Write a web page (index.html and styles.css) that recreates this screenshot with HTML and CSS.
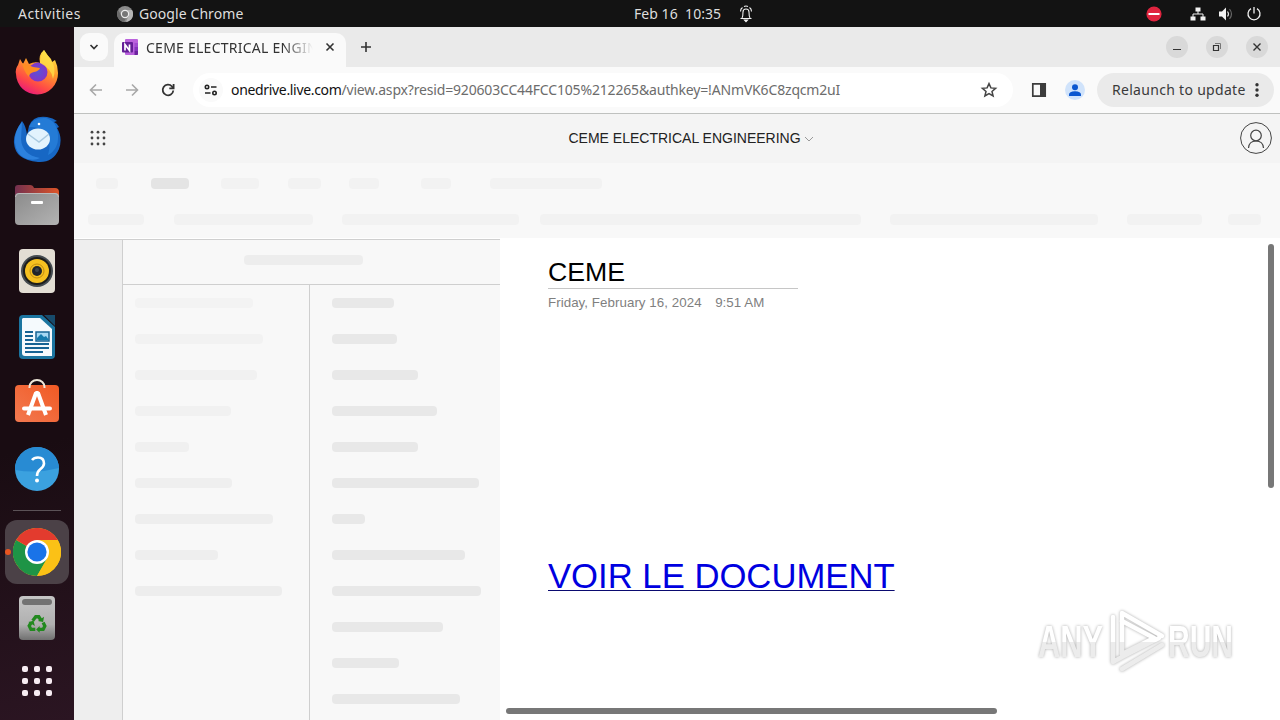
FILE: index.html
```html
<!DOCTYPE html>
<html lang="en">

<head>
    <meta charset="UTF-8">
    <meta name="viewport" content="width=device-width, initial-scale=1.0">
    <title>CEME ELECTRICAL ENGINEERING</title>
    <link rel="stylesheet" href="styles.css">
</head>

<body>
    <div class="topbar">
        <span class="activities">Activities</span>
        <svg class="app-icon" width="16" height="16" viewBox="0 0 16 16">
            <circle cx="8" cy="8" r="8" fill="#8b8b8b"/>
            <path d="M8 4h7A8 8 0 0 1 9 16l2.500-6z" fill="#b5b5b5"/>
            <path d="M1.200 4A8 8 0 0 0 7 16l2-4-5-3z" fill="#6a6a6a"/>
            <circle cx="8" cy="8" r="4.200" fill="#eee"/>
            <circle cx="8" cy="8" r="3" fill="#777"/>
        </svg>
        <span class="app-name">Google Chrome</span>
        <span class="clock">Feb 16&nbsp; 10:35</span>
        <svg class="bell" width="14" height="18" viewBox="0 0 14 18" fill="none" stroke="#f2f2f2" stroke-width="1.100">
            <path d="M1.500 13.500h11M3 13c1-1.500 1-3 1-6 0-4 6-4 6 0 0 3 0 4.500 1 6M3.500 2.500C2 3.500 1.500 5 1.500 6.500M10.500 2.500c1.500 1 2 2.500 2 4M5 1.500q2-1 4 0"/>
            <path d="M5.500 15h3l-1.500 1.600z" fill="#fff"/>
        </svg>
        <div class="tray">
            <svg class="dnd" width="16" height="16" viewBox="0 0 16 16">
                <circle cx="8" cy="8" r="7.600" fill="#e0243f"/>
                <path d="M2.500 8h11" stroke="#fff" stroke-width="2"/>
            </svg>
            <svg width="16" height="16" viewBox="0 0 16 16" fill="#f2f2f2">
                <path d="M5.500 1.500h5v4h-5zM.5 10.500h5v4h-5zM10.500 10.500h5v4h-5z"/>
                <path d="M8 5v3M3 11V8h10v3" fill="none" stroke="#f2f2f2"/>
            </svg>
            <svg width="16" height="16" viewBox="0 0 16 16">
                <path d="M1 5.500h3l4-4v13l-4-4H1z" fill="#f2f2f2"/>
                <path d="M9.500 5.500q2 2.500 0 5" fill="none" stroke="#ddd" stroke-width="1.200"/>
                <path d="M11.500 3q4 5 0 10" fill="none" stroke="#666" stroke-width="1.200"/>
            </svg>
            <svg width="16" height="16" viewBox="0 0 16 16" fill="none" stroke="#f2f2f2" stroke-width="1.300">
                <path d="M8 1v6.500M5 2.600a6 6 0 1 0 6 0"/>
            </svg>
        </div>
    </div>

    <div class="desktop">
        <div class="dock">
            <!-- Firefox -->
            <svg class="firefox" width="48" height="48" viewBox="0 0 48 48">
                <defs>
                    <linearGradient id="ff" x1=".8" y1="0" x2=".3" y2="1">
                        <stop offset="0" stop-color="#fff04a"/>
                        <stop offset=".4" stop-color="#ff9a2a"/>
                        <stop offset=".75" stop-color="#ff4a46"/>
                        <stop offset="1" stop-color="#e8197c"/>
                    </linearGradient>
                    <radialGradient id="ffglobe">
                        <stop offset="0" stop-color="#5b51d8"/>
                        <stop offset="1" stop-color="#8236c8"/>
                    </radialGradient>
                </defs>
                <path d="M5 17l2-6 3 5 3-6 3 6q6-3 11-1Q25 7 31 2q3 5 7 9l1 3 3-2q3 6 3 13a21 21 0 0 1-42 1q-1-5 2-9z" fill="url(#ff)"/>
                <circle cx="25" cy="24" r="9.500" fill="url(#ffglobe)"/>
                <path d="M9 15q7 2 11 4l7 1q-1 3-6 4-5 1-5 5-5-5-7-14z" fill="#ff8d23"/>
                <path d="M31 2q4 6 7 10 6 9 2 19-1-10-13-16 0-7 4-13z" fill="#ffe14a" opacity=".75"/>
            </svg>
            <!-- Thunderbird -->
            <svg class="thunderbird" width="48" height="48" viewBox="0 0 48 48">
                <path d="M16 11Q20 0 34 2q6 1 10 4l-3 1q3 1 5 5l-2 1q6 10 2 21-6 14-21 13Q2 45 1 28 0 19 9 6q4 5 5 14z" fill="#1767c4"/>
                <path d="M16 12Q20 2 33 3q11 3 12 17 1 14-10 20 4-13-2-22-6-7-17-6z" fill="#247bd6"/>
                <path d="M2 23q-1 16 12 21 8 2 13-1Q9 40 8 24l1-17q-6 7-7 16z" fill="#3288e4" opacity=".8"/>
                <ellipse cx="25" cy="24" rx="12" ry="10.500" fill="#e2f3fd"/>
                <path d="M15 19l11 8 10-8" fill="none" stroke="#a8c9df" stroke-width="1.500"/>
                <circle cx="26" cy="9" r="1.300" fill="#fff"/>
            </svg>
            <!-- Files -->
            <svg class="files" width="46" height="42" viewBox="0 0 46 42">
                <defs>
                    <linearGradient id="tab">
                        <stop offset="0" stop-color="#73304f"/>
                        <stop offset="1" stop-color="#de5528"/>
                    </linearGradient>
                    <linearGradient id="folder" x2="1" y2="1">
                        <stop offset="0" stop-color="#8b8b8b"/>
                        <stop offset="1" stop-color="#b3b3b3"/>
                    </linearGradient>
                </defs>
                <path d="M1 15V4q0-3 3-3h12q3 0 4 3h21q4 0 4 4v8z" fill="url(#tab)"/>
                <rect x="1" y="9" width="44" height="32" rx="4" fill="url(#folder)"/>
                <path d="M1.500 13q0-3.500 3.500-3.500h36q3.500 0 3.500 3.500" fill="none" stroke="#bbb"/>
                <rect x="17" y="17" width="12" height="3" rx="1" fill="#fff"/>
            </svg>
            <!-- Rhythmbox -->
            <svg class="music" width="38" height="46" viewBox="0 0 38 46">
                <rect x="1" y="1" width="36" height="44" rx="4" fill="#e3ded4"/>
                <circle cx="19" cy="23" r="16" fill="#444b50"/>
                <circle cx="19" cy="23" r="14" fill="#1d1d1b"/>
                <circle cx="19" cy="23" r="12" fill="#f5c020"/>
                <circle cx="19" cy="23" r="7" fill="none" stroke="#c28d10"/>
                <circle cx="19" cy="23" r="5" fill="#20252b"/>
                <circle cx="19" cy="22" r="2" fill="#3c444d"/>
            </svg>
            <!-- Writer -->
            <svg class="writer" width="38" height="46" viewBox="0 0 38 46">
                <path d="M5 1h19l13 12v28q0 4-4 4H5q-4 0-4-4V5q0-4 4-4z" fill="#1b75a0"/>
                <path d="M26 1h11v11z" fill="#174b6b"/>
                <path d="M5 4h17l12 11v27H7q-3 0-3-3V5z" fill="#f5fafd"/>
                <path d="M7 18h8M7 22h8M7 26h8M7 30h24M7 34h24M7 38h18" stroke="#176494" stroke-width="2"/>
                <rect x="18" y="18" width="13" height="9" fill="#a7d8f3" stroke="#176494" stroke-width="1.500"/>
                <path d="M19 26v-2l4-4 3 3 2-1 3 4z" fill="#167bad"/>
            </svg>
            <!-- Software -->
            <svg class="software" width="46" height="46" viewBox="0 0 46 46">
                <defs>
                    <linearGradient id="bag" x1="1" x2="0" y2="1">
                        <stop offset="0" stop-color="#f15a24"/>
                        <stop offset="1" stop-color="#f27950"/>
                    </linearGradient>
                </defs>
                <rect x="1" y="7" width="44" height="37" rx="4" fill="url(#bag)"/>
                <path d="M15.500 10V9a7.500 7 0 0 1 15 0v1" fill="none" stroke="#eee8d9" stroke-width="2"/>
                <path d="M14 37l8-22h2l8 22" fill="none" stroke="#fff" stroke-width="4" stroke-linejoin="bevel"/>
                <path d="M10 30.500h26" stroke="#fff" stroke-width="4" stroke-linecap="round"/>
            </svg>
            <!-- Help -->
            <svg class="help" width="46" height="46" viewBox="0 0 46 46">
                <circle cx="23" cy="23" r="22" fill="#3ba1df"/>
                <path d="M1 24a22 22 0 0 1 44-2q-22 6-44 2z" fill="#288bd3"/>
                <path d="M18 14q2-2.500 6-2.500 6 0 6 6 0 3-4 6-3 2.500-3 6.500" fill="none" stroke="#fff" stroke-width="2.600"/>
                <circle cx="23" cy="34.500" r="2" fill="#fff"/>
            </svg>
            <div class="separator"></div>
            <div class="running">
                <span class="dot"></span>
                <svg width="48" height="48" viewBox="0 0 48 48">
                    <circle cx="24" cy="24" r="24" fill="#fbc116"/>
                    <path d="M24 24L3.200 12A24 24 0 0 0 24 48l10.400-18z" fill="#1e9446"/>
                    <path d="M24 24L3.200 12a24 24 0 0 1 41.600 0z" fill="#e33b2e"/>
                    <path d="M24 12h20.800A24 24 0 0 1 24 48l10.400-18z" fill="#fbc116"/>
                    <circle cx="24" cy="24" r="12" fill="#fff"/>
                    <circle cx="24" cy="24" r="9.600" fill="#1a73e8"/>
                </svg>
            </div>
            <!-- Trash -->
            <svg class="trash" width="38" height="46" viewBox="0 0 38 46">
                <defs>
                    <linearGradient id="bin" x2="0" y2="1">
                        <stop offset="0" stop-color="#c5c5c5"/>
                        <stop offset=".65" stop-color="#b0b0b0"/>
                        <stop offset="1" stop-color="#707070"/>
                    </linearGradient>
                </defs>
                <rect x="1" y="1" width="36" height="44" rx="4" fill="url(#bin)"/>
                <rect x="4" y="4" width="30" height="6" rx="3" fill="#727272"/>
                <g transform="translate(2.500 3.500) scale(.87)">
                    <g fill="none" stroke="#22891f" stroke-width="3.800">
                        <path d="M14 25.500l3.500-4.500h3.500l2.500 4"/>
                        <path d="M26 27.500l2 4-2 4h-5"/>
                        <path d="M17 35.500h-5l-2-4 2-3.500"/>
                    </g>
                    <path d="M20 26l6 1 1-6zM22 31.500v8l-4-4zM9 27l6-1.500 1.500 6z" fill="#22891f"/>
                </g>
            </svg>
            <div class="show-apps">
                <i></i><i></i><i></i><i></i><i></i><i></i><i></i><i></i><i></i>
            </div>
        </div>

        <div class="browser">
            <div class="tabstrip">
                <div class="tab-search">
                    <svg width="10" height="10" viewBox="0 0 10 10" fill="none" stroke="#333" stroke-width="1.700"><path d="M1.500 3L5 6.500 8.500 3"/></svg>
                </div>
                <div class="tab">
                    <svg class="onenote" width="16" height="16" viewBox="0 0 16 16">
                        <rect x="3" y="0" width="13" height="16" rx="1" fill="#ba62dc"/>
                        <path d="M12.500 4H16v4h-3.500z" fill="#a04cd0"/>
                        <path d="M12.500 8H16v4h-3.500z" fill="#8535bd"/>
                        <path d="M12.500 12H16v3q0 1-1 1h-2.500z" fill="#6d229f"/>
                        <rect x="0" y="3" width="11" height="10.500" rx="1" fill="#641f97"/>
                        <path d="M3 11.500v-6l4.500 6v-6" fill="none" stroke="#fff" stroke-width="1.700"/>
                    </svg>
                    <span class="tab-title">CEME ELECTRICAL ENGINEERING</span>
                    <svg class="tab-close" width="10" height="10" viewBox="0 0 10 10" stroke="#333" stroke-width="1.600"><path d="M1.500 1.500l7 7M8.500 1.500l-7 7"/></svg>
                </div>
                <svg class="new-tab" width="12" height="12" viewBox="0 0 12 12" stroke="#333" stroke-width="1.600"><path d="M6 1v10M1 6h10"/></svg>
                <div class="window-buttons">
                    <span><svg width="10" height="10" viewBox="0 0 10 10" stroke="#333"><path d="M1 7.500h8"/></svg></span>
                    <span><svg width="10" height="10" viewBox="0 0 10 10" fill="none" stroke="#333"><path d="M1.500 3.500h5v5h-5z" stroke-width="1.200"/><path d="M3 1.500h5.500V7" stroke="#777"/></svg></span>
                    <span><svg width="10" height="10" viewBox="0 0 10 10" stroke="#333" stroke-width="1.400"><path d="M1.500 1.500l7 7M8.500 1.500l-7 7"/></svg></span>
                </div>
            </div>

            <div class="toolbar">
                <svg class="nav back" width="14" height="14" viewBox="0 0 14 14"><path d="M13 7H2M7 1.500L1.500 7 7 12.500"/></svg>
                <svg class="nav forward" width="14" height="14" viewBox="0 0 14 14"><path d="M1 7h11M7 1.500L12.500 7 7 12.500"/></svg>
                <svg class="nav reload" width="14" height="14" viewBox="0 0 14 14"><path d="M12.300 7.500a5.300 5.300 0 1 1-1.300-4l1.200 1.300M12.600 1v4.300H8.300"/></svg>
                <div class="omnibox">
                    <span class="site-info">
                        <svg width="14" height="12" viewBox="0 0 14 12" fill="none" stroke="#222" stroke-width="1.600">
                            <circle cx="3" cy="3" r="1.700"/><path d="M7 3h5.500M1 9h5.500"/><circle cx="10.500" cy="9" r="1.700"/>
                        </svg>
                    </span>
                    <span class="url"><span class="host">onedrive.live.com</span><span class="path">/view.aspx?resid=920603CC44FCC105%212265&amp;authkey=!ANmVK6C8zqcm2uI</span></span>
                    <svg class="star" width="18" height="18" viewBox="0 0 18 18" fill="none" stroke="#444" stroke-width="1.500"><path d="M9 2.600l1.900 4.300 4.700.4-3.600 3.100 1.100 4.600L9 12.600 4.900 15 6 10.400 2.400 7.300l4.700-.4z"/></svg>
                </div>
                <svg class="side-panel" width="16" height="16" viewBox="0 0 16 16"><path d="M1.800 1.800h12.400v12.400H1.800z" fill="none" stroke="#3c3c3c" stroke-width="1.700"/><path d="M9 2h5v12H9z" fill="#3c3c3c"/></svg>
                <svg class="profile" width="20" height="20" viewBox="0 0 20 20"><circle cx="10" cy="10" r="10" fill="#d0e3fb"/><circle cx="10" cy="7.200" r="3" fill="#0b57d0"/><path d="M4 16v-1.500q0-3 6-3.300 6 .3 6 3.300V16z" fill="#0b57d0"/></svg>
                <div class="relaunch">
                    <span>Relaunch to update</span>
                    <svg width="4" height="16" viewBox="0 0 4 16" fill="#333"><circle cx="2" cy="2.700" r="1.700"/><circle cx="2" cy="8" r="1.700"/><circle cx="2" cy="13.300" r="1.700"/></svg>
                </div>
            </div>

            <div class="page">
                <div class="header">
                    <svg class="waffle" width="16" height="16" viewBox="0 0 16 16" fill="#444">
                        <circle cx="2" cy="2.200" r="1.400"/><circle cx="8" cy="2.200" r="1.400"/><circle cx="14" cy="2.200" r="1.400"/>
                        <circle cx="2" cy="8" r="1.400"/><circle cx="8" cy="8" r="1.400"/><circle cx="14" cy="8" r="1.400"/>
                        <circle cx="2" cy="14" r="1.400"/><circle cx="8" cy="14" r="1.400"/><circle cx="14" cy="14" r="1.400"/>
                    </svg>
                    <span class="doc-name">CEME ELECTRICAL ENGINEERING</span>
                    <svg class="chevron" width="10" height="6" viewBox="0 0 10 6" fill="none" stroke="#999"><path d="M1 1l4 4 4-4"/></svg>
                    <svg class="account" width="32" height="32" viewBox="0 0 32 32" fill="none" stroke="#444">
                        <circle cx="16" cy="16" r="15.400"/><circle cx="16" cy="13.500" r="5.300" stroke-width="1.200"/><path d="M8.500 26q.5-7 7.500-7t7.500 7" stroke-width="1.200"/>
                    </svg>
                </div>

                <div class="ribbon">
                    <div class="ribbon-tabs"><i></i><i></i><i></i><i></i><i></i><i></i><i></i></div>
                    <div class="ribbon-tools"><i></i><i></i><i></i><i></i><i></i><i></i><i></i></div>
                </div>

                <div class="workspace">
                    <div class="navigation">
                        <div class="rail"></div>
                        <div class="panes">
                            <div class="pane-header"><i></i></div>
                            <div class="lists">
                                <div class="sections"><i></i><i></i><i></i><i></i><i></i><i></i><i></i><i></i><i></i></div>
                                <div class="pages"><i></i><i></i><i></i><i></i><i></i><i></i><i></i><i></i><i></i><i></i><i></i><i></i></div>
                            </div>
                        </div>
                    </div>
                    <div class="canvas">
                        <h1>CEME</h1>
                        <p class="date"><span>Friday, February 16, 2024</span><span>9:51 AM</span></p>
                        <a class="doc-link" href="#">VOIR LE DOCUMENT</a>
                        <div class="vscroll"></div>
                        <div class="hscroll"></div>
                    </div>
                </div>
            </div>
        </div>
    </div>

    <!-- watermark over the recording -->
    <svg class="watermark" width="220" height="80" viewBox="0 0 220 80">
        <defs>
            <linearGradient id="wm" gradientUnits="userSpaceOnUse" x1="0" y1="0" x2="0" y2="80">
                <stop offset=".49" stop-color="#fff"/>
                <stop offset=".49" stop-color="#ececec"/>
            </linearGradient>
        </defs>
        <g fill="url(#wm)">
            <text x="8" y="54" textLength="65" lengthAdjust="spacingAndGlyphs">ANY</text>
            <text x="138" y="54" textLength="65" lengthAdjust="spacingAndGlyphs">RUN</text>
        </g>
        <g fill="none" stroke="url(#wm)" stroke-width="4.500" stroke-linejoin="round" stroke-linecap="round">
            <path d="M92 52V10l40 23M83 14v45l9-5 37-19"/>
            <path d="M92 18l32 17-32 16M92 66l40-24"/>
        </g>
    </svg>
</body>

</html>
```
FILE: styles.css
```css
* {
    box-sizing: border-box;
}

body {
    margin: 0;
    width: 1280px;
    height: 720px;
    overflow: hidden;
    display: flex;
    flex-direction: column;
    font-family: "Noto Sans", "Open Sans", sans-serif;
    font-size: 14px;
    background: #fff;
}

svg {
    display: block;
    flex-shrink: 0;
}

i {
    display: block;
    flex-shrink: 0;
}

/* desktop top bar */
.topbar {
    height: 27px;
    flex-shrink: 0;
    display: flex;
    align-items: center;
    background: #131313;
    color: #dedede;
    padding-left: 18px;
    white-space: nowrap;
}

.activities {
    width: 99px;
    letter-spacing: 0.45px;
}

.app-name {
    width: 501px;
    padding-left: 6px;
    letter-spacing: 0.08px;
}

.clock {
    width: 105px;
    letter-spacing: 0.05px;
}

.tray {
    display: flex;
    margin-left: auto;
    margin-right: 18px;
    gap: 12px;
}

.dnd {
    margin-right: 16px;
}

.desktop {
    flex: 1;
    min-height: 0;
    display: flex;
}

/* dock */
.dock {
    width: 74px;
    flex-shrink: 0;
    display: flex;
    flex-direction: column;
    align-items: center;
    background: linear-gradient(165deg, #190c12 60%, #2b1522);
}

.firefox {
    margin-top: 21px;
}

.thunderbird {
    margin-top: 19px;
}

.files {
    margin-top: 21px;
}

.music {
    margin-top: 22px;
}

.writer {
    margin-top: 20px;
}

.software {
    margin-top: 18px;
}

.help {
    margin-top: 22px;
}

.separator {
    width: 48px;
    height: 1px;
    margin-top: 18px;
    background: #5b5257;
}

.running {
    width: 64px;
    height: 64px;
    margin-top: 9px;
    border-radius: 12px;
    background: #4b4147;
    display: flex;
    align-items: center;
    justify-content: center;
    position: relative;
}

.dot {
    position: absolute;
    left: 0;
    top: 29px;
    width: 6px;
    height: 6px;
    border-radius: 3px;
    background: #e95420;
}

.trash {
    margin-top: 11px;
}

.show-apps {
    display: grid;
    grid-template-columns: repeat(3, 6px);
    gap: 6px;
    margin-top: 25px;
}

.show-apps i {
    width: 6px;
    height: 6px;
    border-radius: 2px;
    background: #f7ecf2;
}

/* browser */
.browser {
    flex: 1;
    min-width: 0;
    display: flex;
    flex-direction: column;
    background: #fafafa;
}

.tabstrip {
    height: 40px;
    flex-shrink: 0;
    display: flex;
    align-items: center;
    padding-left: 6px;
    background: #eaeaea;
}

.tab-search {
    width: 28px;
    height: 28px;
    border-radius: 9px;
    background: #fafafa;
    display: flex;
    align-items: center;
    justify-content: center;
}

.tab {
    width: 232px;
    height: 34px;
    margin: 6px 0 0 6px;
    padding: 0 11px 6px 8px;
    border-radius: 10px 10px 0 0;
    background: #fafafa;
    display: flex;
    align-items: center;
}

.tab-title {
    width: 167px;
    margin-left: 8px;
    overflow: hidden;
    white-space: nowrap;
    letter-spacing: 0.25px;
    color: #333;
    -webkit-mask-image: linear-gradient(90deg, #000 82%, transparent);
    mask-image: linear-gradient(90deg, #000 82%, transparent);
}

.tab-close {
    margin-left: auto;
}

.new-tab {
    margin-left: 14px;
}

.window-buttons {
    margin-left: auto;
    margin-right: 12px;
    display: flex;
    gap: 18px;
}

.window-buttons span {
    width: 22px;
    height: 22px;
    border-radius: 50%;
    background: #d9d9d9;
    display: flex;
    align-items: center;
    justify-content: center;
}

.toolbar {
    height: 47px;
    flex-shrink: 0;
    display: flex;
    align-items: center;
    padding-left: 15px;
    border-bottom: 1px solid #bfc1bf;
}

.nav {
    fill: none;
    stroke: #a8a8a8;
    stroke-width: 1.6;
}

.forward {
    margin-left: 22px;
}

.reload {
    margin-left: 22px;
    stroke: #333;
    stroke-width: 1.8;
}

.omnibox {
    width: 820px;
    height: 34px;
    margin-left: 18px;
    padding: 0 15px 0 6px;
    border-radius: 17px;
    background: #fff;
    display: flex;
    align-items: center;
}

.site-info {
    width: 24px;
    height: 24px;
    border-radius: 12px;
    background: #fafafa;
    display: flex;
    align-items: center;
    justify-content: center;
}

.url {
    margin-left: 8px;
    padding-bottom: 2px;
    white-space: nowrap;
    letter-spacing: -0.17px;
    color: #6c6c6c;
}

.host {
    letter-spacing: -0.33px;
    color: #111;
}

.star {
    margin-left: auto;
}

.side-panel {
    margin-left: 18px;
}

.profile {
    margin-left: 18px;
}

.relaunch {
    width: 177px;
    height: 34px;
    margin-left: 12px;
    padding: 0 15px 1px;
    border-radius: 17px;
    background: #eaeaea;
    color: #3a3a3a;
    letter-spacing: 0.3px;
    display: flex;
    align-items: center;
    justify-content: space-between;
    white-space: nowrap;
}

/* onenote page */
.page {
    flex: 1;
    min-height: 0;
    display: flex;
    flex-direction: column;
    font-family: "Liberation Sans", Arial, sans-serif;
}

.header {
    height: 49px;
    flex-shrink: 0;
    display: flex;
    align-items: center;
    padding: 0 8px 1px 16px;
    background: #f4f4f4;
    color: #222;
}

.doc-name {
    margin-left: 462.5px;
    white-space: nowrap;
}

.chevron {
    margin-left: 3px;
    margin-top: 2px;
}

.account {
    margin-left: auto;
}

.ribbon {
    height: 75px;
    flex-shrink: 0;
    background: #f8f8f8;
    padding-top: 15px;
}

.ribbon-tabs,
.ribbon-tools {
    display: flex;
    height: 11px;
}

.ribbon i {
    height: 11px;
    border-radius: 4px;
    background: #f2f2f2;
}

.ribbon-tabs {
    padding-left: 22px;
}

.ribbon-tools {
    padding-left: 14px;
    margin-top: 25px;
}

.ribbon-tabs i:nth-child(1) { width: 22px; }
.ribbon-tabs i:nth-child(2) { width: 38px; margin-left: 33px; background: #e4e4e4; }
.ribbon-tabs i:nth-child(3) { width: 38px; margin-left: 32px; }
.ribbon-tabs i:nth-child(4) { width: 33px; margin-left: 29px; }
.ribbon-tabs i:nth-child(5) { width: 30px; margin-left: 28px; }
.ribbon-tabs i:nth-child(6) { width: 30px; margin-left: 42px; }
.ribbon-tabs i:nth-child(7) { width: 112px; margin-left: 39px; }

.ribbon-tools i:nth-child(1) { width: 56px; }
.ribbon-tools i:nth-child(2) { width: 139px; margin-left: 30px; }
.ribbon-tools i:nth-child(3) { width: 177px; margin-left: 29px; }
.ribbon-tools i:nth-child(4) { width: 321px; margin-left: 21px; }
.ribbon-tools i:nth-child(5) { width: 208px; margin-left: 29px; }
.ribbon-tools i:nth-child(6) { width: 75px; margin-left: 29px; }
.ribbon-tools i:nth-child(7) { width: 33px; margin-left: 26px; }

.workspace {
    flex: 1;
    min-height: 0;
    display: flex;
    background: #fff;
}

.navigation {
    width: 426px;
    flex-shrink: 0;
    display: flex;
    margin-top: 1px;
    border-top: 1px solid #cfcfcf;
    background: #f8f8f8;
}

.rail {
    width: 49px;
    background: #eee;
    border-right: 1px solid #cfcfcf;
}

.panes {
    flex: 1;
    display: flex;
    flex-direction: column;
}

.pane-header {
    height: 45px;
    flex-shrink: 0;
    padding: 15px 0 0 121px;
    border-bottom: 1px solid #cfcfcf;
}

.panes i {
    height: 10px;
    border-radius: 4px;
    background: #e8e8e8;
}

.panes .pane-header i {
    width: 119px;
    background: #ededed;
}

.lists {
    flex: 1;
    min-height: 0;
    display: flex;
}

.sections,
.pages {
    display: flex;
    flex-direction: column;
    gap: 26px;
    padding-top: 13px;
}

.sections {
    width: 187px;
    padding-left: 12px;
    border-right: 1px solid #cfcfcf;
}

.pages {
    padding-left: 22px;
}

.sections i:nth-child(1) { width: 118px; background: #f3f3f3; }
.sections i:nth-child(2) { width: 128px; background: #f2f2f2; }
.sections i:nth-child(3) { width: 122px; background: #f1f1f1; }
.sections i:nth-child(4) { width: 96px; background: #f1f1f1; }
.sections i:nth-child(5) { width: 54px; background: #f0f0f0; }
.sections i:nth-child(6) { width: 97px; background: #efefef; }
.sections i:nth-child(7) { width: 138px; background: #eee; }
.sections i:nth-child(8) { width: 83px; background: #eee; }
.sections i:nth-child(9) { width: 147px; background: #ededed; }

.pages i:nth-child(1) { width: 62px; }
.pages i:nth-child(2) { width: 65px; }
.pages i:nth-child(3) { width: 86px; }
.pages i:nth-child(4) { width: 105px; }
.pages i:nth-child(5) { width: 86px; }
.pages i:nth-child(6) { width: 147px; }
.pages i:nth-child(7) { width: 33px; }
.pages i:nth-child(8) { width: 133px; }
.pages i:nth-child(9) { width: 149px; }
.pages i:nth-child(10) { width: 111px; }
.pages i:nth-child(11) { width: 67px; }
.pages i:nth-child(12) { width: 128px; }

.canvas {
    flex: 1;
    position: relative;
    padding: 19px 0 0 48px;
}

h1 {
    width: 250px;
    height: 32px;
    margin: 0;
    border-bottom: 1px solid #c6c6c6;
    font-size: 26.67px;
    font-weight: normal;
    line-height: 31px;
    color: #000;
}

.date {
    display: flex;
    gap: 13.5px;
    margin: 6px 0 0;
    font-size: 13.33px;
    line-height: 16px;
    letter-spacing: 0.05px;
    color: #7f7f7f;
}

.doc-link {
    display: block;
    margin-top: 245px;
    font-size: 34.67px;
    line-height: 40px;
    color: #0000e0;
    text-decoration: underline #0a0a70 1px;
    text-underline-offset: 2px;
    text-decoration-skip-ink: none;
}

.vscroll,
.hscroll {
    position: absolute;
    border-radius: 3px;
    background: #777;
}

.vscroll {
    right: 6px;
    top: 6px;
    width: 6px;
    height: 244px;
}

.hscroll {
    left: 6px;
    bottom: 6px;
    width: 491px;
    height: 6px;
}

.watermark {
    position: absolute;
    left: 1030px;
    top: 603px;
    font-family: "Liberation Sans", Arial, sans-serif;
    font-size: 45px;
    font-weight: bold;
    filter: drop-shadow(0 0 1.5px #aaa);
}
```
